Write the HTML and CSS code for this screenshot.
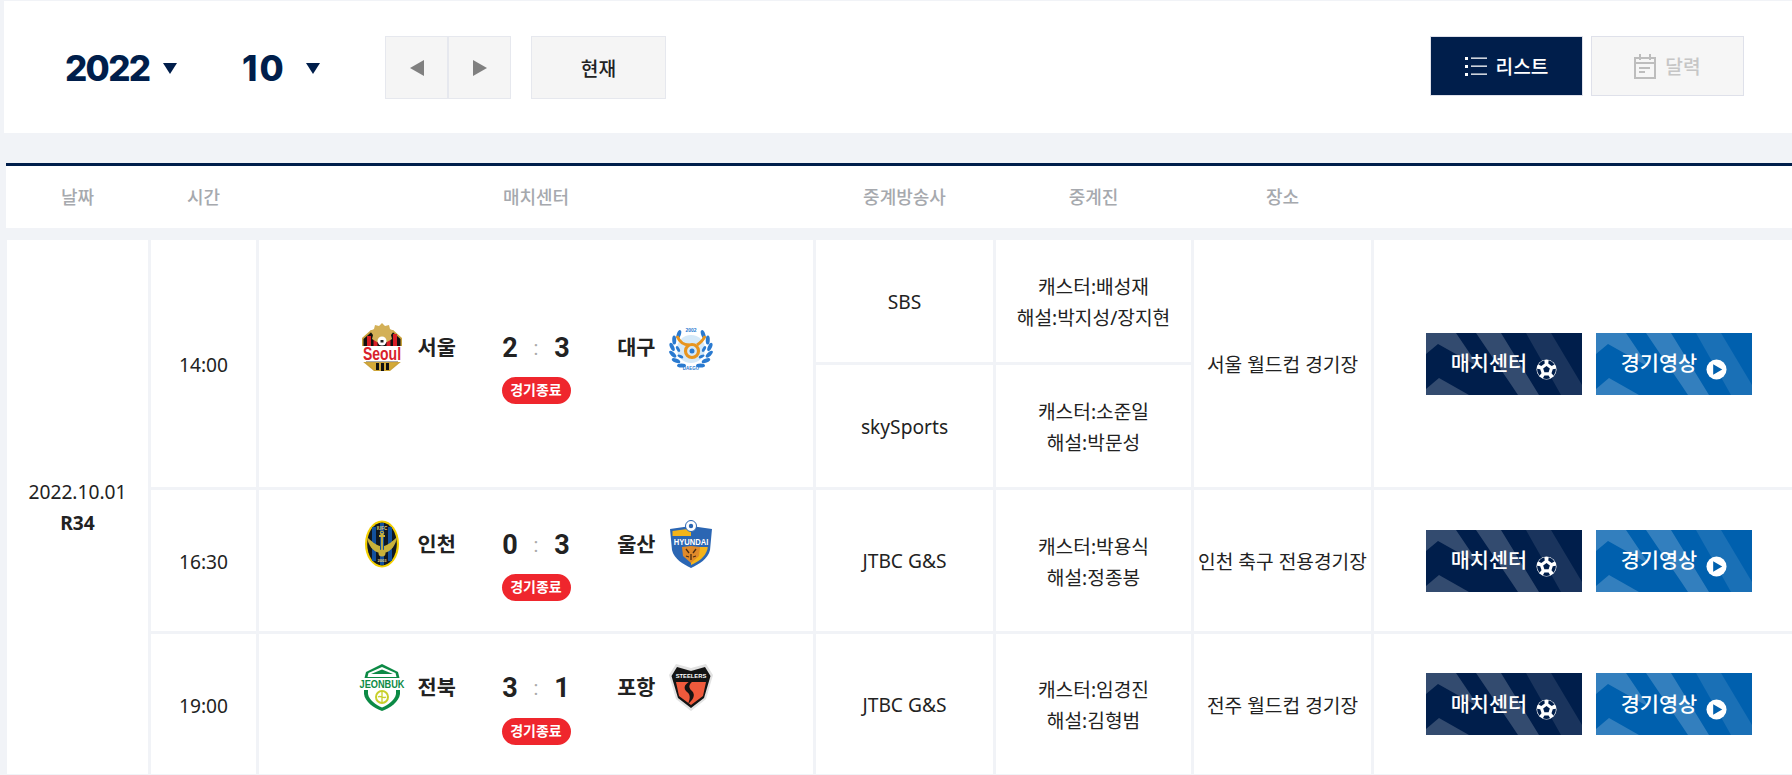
FILE: index.html
```html
<!DOCTYPE html>
<html lang="ko">
<head>
  <meta charset="utf-8">
  <title>경기일정</title>
  <link rel="stylesheet" href="styles.css">
</head>
<body>
  <svg class="defs" width="0" height="0">
    <symbol id="ball" viewBox="0 0 22 22">
      <circle cx="11" cy="11" r="10.500" fill="#fff"/>
      <polygon points="11,7.300 14.500,9.900 13.200,14 8.800,14 7.500,9.900" fill="#001e4b"/>
      <g fill="#001e4b">
        <path d="M7.200 1.900A9.800 9.800 0 0 1 14.800 1.900L13.200 4.800H8.800Z" transform="rotate(36 11 11)"/>
        <path d="M7.200 1.900A9.800 9.800 0 0 1 14.800 1.900L13.200 4.800H8.800Z" transform="rotate(108 11 11)"/>
        <path d="M7.200 1.900A9.800 9.800 0 0 1 14.800 1.900L13.200 4.800H8.800Z" transform="rotate(180 11 11)"/>
        <path d="M7.200 1.900A9.800 9.800 0 0 1 14.800 1.900L13.200 4.800H8.800Z" transform="rotate(252 11 11)"/>
        <path d="M7.200 1.900A9.800 9.800 0 0 1 14.800 1.900L13.200 4.800H8.800Z" transform="rotate(324 11 11)"/>
      </g>
    </symbol>
    <symbol id="play" viewBox="0 0 22 22">
      <circle cx="11" cy="11" r="10.500" fill="#fff"/>
      <polygon points="7.500,5.500 17,11 7.500,16.500" fill="#0060ae"/>
    </symbol>
  </svg>

  <div class="topbar">
    <div class="picker picker-year"><span class="picker-val">2022</span><i class="caret"></i></div>
    <div class="picker picker-month"><span class="picker-val">10</span><i class="caret"></i></div>
    <div class="nav">
      <button class="nav-btn"><i class="arrow arrow-left"></i></button>
      <button class="nav-btn"><i class="arrow arrow-right"></i></button>
    </div>
    <button class="now-btn">현재</button>
    <div class="views">
      <button class="view-btn view-on">
        <svg width="22" height="20" viewBox="0 0 22 20" fill="#fff">
          <rect x="0" y="1" width="3" height="3"/><rect x="0" y="9" width="3" height="3"/><rect x="0" y="17" width="3" height="3"/>
          <rect x="6" y="1.500" width="16" height="1.300"/><rect x="6" y="9.500" width="16" height="1.300"/><rect x="6" y="17.500" width="16" height="1.300"/>
        </svg>
        리스트
      </button>
      <button class="view-btn">
        <svg width="22" height="25" viewBox="0 0 22 25" fill="none" stroke="#bdbdbd" stroke-width="2">
          <rect x="1" y="4" width="20" height="20"/>
          <path d="M1 9H21M6 0V6M16 0V6M5 14H16M5 18H11"/>
        </svg>
        달력
      </button>
    </div>
  </div>

  <div class="thead">
    <div>날짜</div>
    <div>시간</div>
    <div>매치센터</div>
    <div>중계방송사</div>
    <div>중계진</div>
    <div>장소</div>
    <div></div>
  </div>

  <div class="tbody">
    <div class="cell cell-date">2022.10.01<br><b>R34</b></div>

    <!-- 서울 : 대구 -->
    <div class="cell txt span2">14:00</div>
    <div class="cell span2">
      <div class="match">
        <div class="team">
          <svg class="logo" viewBox="0 0 48 48">
            <polygon points="13,7 35,7 44,15 44,38 32,48 16,48 4,38 4,15" fill="#c9a23c"/>
            <polygon points="14,8.500 34,8.500 42.500,16 42.500,25 5.500,25 5.500,16" fill="#111"/>
            <path d="M9 13h4v12H9z M15.500 9h4v16h-4z M28.500 9h4v16h-4z M35 11h4v14h-4z" fill="#d81f26"/>
            <path d="M24 0l3 3 4-1 1 4 4 2-3 4 1 4-5 3H19l-5-3 1-4-3-4 4-2 1-4 4 1z" fill="#d3b057"/>
            <circle cx="24" cy="18" r="4.500" fill="#fff"/><path d="M22.500 17h3v2.500h-3z" fill="#222"/>
            <rect x="4" y="23" width="40" height="16" fill="#fff"/>
            <text transform="translate(24 37) scale(1 1.300)" class="logo-text" font-size="14" fill="#d81f2c" text-anchor="middle">Seoul</text>
            <rect x="8" y="38" width="32" height="1" fill="#aaa"/>
            <polygon points="9,40 39,40 31,47.500 17,47.500" fill="#d4a937"/>
            <path d="M18 40h3v7h-3z M23 40h3v8h-3z M28 40h3v7h-3z" fill="#111"/>
          </svg>
          <span class="name">서울</span>
        </div>
        <div class="result">
          <div class="score"><span>2</span><em>:</em><span>3</span></div>
          <span class="badge">경기종료</span>
        </div>
        <div class="team team-away">
          <span class="name">대구</span>
          <svg class="logo" viewBox="0 0 48 48">
            <circle cx="24" cy="26" r="14" fill="#d5e9f8"/>
            <g fill="#2a7ad0">
              <ellipse cx="24" cy="7" rx="2" ry="4.500" transform="rotate(40 24 26) rotate(-60 24 7)"/>
              <ellipse cx="24" cy="7" rx="2" ry="4.500" transform="rotate(62 24 26) rotate(-60 24 7)"/>
              <ellipse cx="24" cy="7" rx="2" ry="4.500" transform="rotate(84 24 26) rotate(-60 24 7)"/>
              <ellipse cx="24" cy="7" rx="2" ry="4.500" transform="rotate(106 24 26) rotate(-60 24 7)"/>
              <ellipse cx="24" cy="7" rx="2" ry="4.500" transform="rotate(128 24 26) rotate(-60 24 7)"/>
              <ellipse cx="24" cy="7" rx="2" ry="4.500" transform="rotate(150 24 26) rotate(-60 24 7)"/>
              <ellipse cx="24" cy="7" rx="2" ry="4.500" transform="rotate(-40 24 26) rotate(60 24 7)"/>
              <ellipse cx="24" cy="7" rx="2" ry="4.500" transform="rotate(-62 24 26) rotate(60 24 7)"/>
              <ellipse cx="24" cy="7" rx="2" ry="4.500" transform="rotate(-84 24 26) rotate(60 24 7)"/>
              <ellipse cx="24" cy="7" rx="2" ry="4.500" transform="rotate(-106 24 26) rotate(60 24 7)"/>
              <ellipse cx="24" cy="7" rx="2" ry="4.500" transform="rotate(-128 24 26) rotate(60 24 7)"/>
              <ellipse cx="24" cy="7" rx="2" ry="4.500" transform="rotate(-150 24 26) rotate(60 24 7)"/>
              <ellipse cx="24" cy="13" rx="1.500" ry="3.200" transform="rotate(90 24 26) rotate(-60 24 13)"/>
              <ellipse cx="24" cy="13" rx="1.500" ry="3.200" transform="rotate(125 24 26) rotate(-60 24 13)"/>
              <ellipse cx="24" cy="13" rx="1.500" ry="3.200" transform="rotate(-90 24 26) rotate(60 24 13)"/>
              <ellipse cx="24" cy="13" rx="1.500" ry="3.200" transform="rotate(-125 24 26) rotate(60 24 13)"/>
            </g>
            <text x="24" y="9" class="logo-text" font-size="5" fill="#2a7ad0" text-anchor="middle">2002</text>
            <text x="24" y="47" class="logo-text" font-size="4.500" fill="#2a7ad0" text-anchor="middle">DAEGU</text>
            <path d="M10 13c3 7 7 9 12 9 M38 13c-2 5-5 7-8 9" fill="none" stroke="#e8951f" stroke-width="3"/>
            <circle cx="25" cy="28" r="6.500" fill="none" stroke="#e8951f" stroke-width="3.200"/>
            <circle cx="25" cy="28" r="2.500" fill="#2a7ad0"/>
          </svg>
        </div>
      </div>
    </div>
    <div class="cell latin">SBS</div>
    <div class="cell txt">캐스터:배성재<br>해설:박지성/장지현</div>
    <div class="cell txt span2">서울 월드컵 경기장</div>
    <div class="cell cell-btns span2">
      <a class="btn btn-center">매치센터<svg class="btn-icon"><use href="#ball"/></svg></a>
      <a class="btn btn-video">경기영상<svg class="btn-icon"><use href="#play"/></svg></a>
    </div>
    <div class="cell latin">skySports</div>
    <div class="cell txt">캐스터:소준일<br>해설:박문성</div>

    <!-- 인천 : 울산 -->
    <div class="cell txt">16:30</div>
    <div class="cell">
      <div class="match">
        <div class="team">
          <svg class="logo" viewBox="0 0 48 48">
            <ellipse cx="24" cy="24" rx="17" ry="23.500" fill="#f3cf00"/>
            <ellipse cx="24" cy="24" rx="14.800" ry="21.500" fill="#101820"/>
            <path d="M14 7h4v34h-4z M22 3h4v42h-4z M30 7h4v34h-4z" fill="#12509c"/>
            <text x="24" y="10" class="logo-text" font-size="4.500" fill="#e8d27a" text-anchor="middle">IUFC</text>
            <path d="M9 17c4 4 9 8 13 9v7C15 32 10 25 9 17z M39 17c-4 4-9 8-13 9v7c7-1 12-8 13-16z" fill="#c9b23a"/>
            <path d="M24 13v20M21 16h6" stroke="#c9b23a" stroke-width="1.800" fill="none"/>
            <circle cx="24" cy="13" r="1.800" fill="none" stroke="#c9b23a"/>
            <circle cx="24" cy="33" r="3.500" fill="#c9b23a"/>
            <text x="24" y="42" class="logo-text" font-size="4" fill="#e8d27a" text-anchor="middle">2003</text>
          </svg>
          <span class="name">인천</span>
        </div>
        <div class="result">
          <div class="score"><span>0</span><em>:</em><span>3</span></div>
          <span class="badge">경기종료</span>
        </div>
        <div class="team team-away">
          <span class="name">울산</span>
          <svg class="logo" viewBox="0 0 48 48">
            <path d="M3 9L24 6 45 9 43 30C41 39 32 44 24 48 16 44 7 39 5 30Z" fill="#2b66b3"/>
            <path d="M5.500 11L24 8.500V16H5.500Z" fill="#f4b41a"/>
            <path d="M24 27V45C31 42 38.500 37 40.500 29L40.700 27Z" fill="#f4b41a"/>
            <circle cx="24" cy="6" r="5.500" fill="#fff" stroke="#2b66b3"/>
            <circle cx="24" cy="6" r="2.200" fill="#2b66b3"/>
            <text transform="translate(24 24.500) scale(1 1.300)" class="logo-text" font-size="7.600" fill="#fff" text-anchor="middle">HYUNDAI</text>
            <path d="M15 27L24 26 33 27 32 36 24 43 16 36Z" fill="#e08a2a"/>
            <path d="M19 29l3 4M29 29l-3 4M24 34v6M19 36l3 1M29 36l-3 1" stroke="#4a2b12" stroke-width="1.300"/>
          </svg>
        </div>
      </div>
    </div>
    <div class="cell latin">JTBC G&amp;S</div>
    <div class="cell txt">캐스터:박용식<br>해설:정종봉</div>
    <div class="cell txt">인천 축구 전용경기장</div>
    <div class="cell cell-btns">
      <a class="btn btn-center">매치센터<svg class="btn-icon"><use href="#ball"/></svg></a>
      <a class="btn btn-video">경기영상<svg class="btn-icon"><use href="#play"/></svg></a>
    </div>

    <!-- 전북 : 포항 -->
    <div class="cell txt">19:00</div>
    <div class="cell">
      <div class="match">
        <div class="team">
          <svg class="logo" viewBox="0 0 48 48">
            <path d="M8 8L24 0 40 8 42 16H6Z" fill="#0c8a45"/>
            <path d="M10.500 9L24 3 37.500 9 38.500 13H9.500Z" fill="#fff"/>
            <path d="M13 10L24 5.500 35 10Z" fill="#0c8a45"/>
            <path d="M6 24H42V30C41 38 32 44 24 47 16 44 7 38 6 30Z" fill="#0c8a45"/>
            <path d="M10 26H38V30C37 36 30 41 24 43.500 18 41 11 36 10 30Z" fill="#fff"/>
            <rect x="0" y="14" width="48" height="12" fill="#fff"/>
            <text transform="translate(24 24) scale(1 1.200)" class="logo-text" font-size="9.200" fill="#0c8a45" text-anchor="middle">JEONBUK</text>
            <circle cx="24" cy="33" r="6" fill="none" stroke="#c8cf2a" stroke-width="2"/>
            <path d="M20 33c3-2 5 2 8 0M24 27v12" fill="none" stroke="#c8cf2a" stroke-width="1.300"/>
          </svg>
          <span class="name">전북</span>
        </div>
        <div class="result">
          <div class="score"><span>3</span><em>:</em><span>1</span></div>
          <span class="badge">경기종료</span>
        </div>
        <div class="team team-away">
          <span class="name">포항</span>
          <svg class="logo" viewBox="0 0 48 48">
            <path d="M9 0L24 4 39 0 46 11 39 35 24 47 9 35 2 11Z" fill="#e2e2e2"/>
            <path d="M10 3L24 7 38 3 43.500 12 37 34 24 44 11 34 4.500 12Z" fill="#141414"/>
            <path d="M9 18L39 18 36 32 24 41 12 32Z" fill="#ef5a3c"/>
            <path d="M31 15C22 18 20 23 25 27 29 31 26 36 21 40 24 33 23 30 19 27 15 22 20 17 31 15Z" fill="#141414"/>
            <text x="24" y="14" class="logo-text" font-size="5.800" fill="#fff" text-anchor="middle">STEELERS</text>
          </svg>
        </div>
      </div>
    </div>
    <div class="cell latin">JTBC G&amp;S</div>
    <div class="cell txt">캐스터:임경진<br>해설:김형범</div>
    <div class="cell txt">전주 월드컵 경기장</div>
    <div class="cell cell-btns">
      <a class="btn btn-center">매치센터<svg class="btn-icon"><use href="#ball"/></svg></a>
      <a class="btn btn-video">경기영상<svg class="btn-icon"><use href="#play"/></svg></a>
    </div>
  </div>
</body>
</html>
```

FILE: styles.css
```css
html, body {
  margin: 0;
  padding: 0;
}
body {
  background-color: #f1f3f7;
  font-family: "Noto Sans", "Noto Sans CJK KR", sans-serif;
  font-size: 19.2px;
  line-height: 30.7px;
  color: #222;
  padding-top: 1px;
}
button {
  font-family: inherit;
  cursor: pointer;
}
.defs {
  display: block;
  height: 0;
}

/* top bar */
.topbar {
  display: flex;
  margin-left: 4px;
  height: 132px;
  padding: 35px 48px 0 61px;
  box-sizing: border-box;
  background-color: #fff;
}
.picker {
  display: flex;
  height: 63px;
  align-items: center;
  color: #001e4b;
}
.picker-val {
  font-family: Inter, sans-serif;
  font-size: 35px;
  font-weight: 800;
  line-height: 1;
  padding-top: 2px;
}
.picker-year {
  width: 178px;
}
.picker-year .picker-val {
  letter-spacing: -1.700px;
}
.picker-month {
  width: 143px;
  margin-left: -1px;
}
.picker-month .picker-val {
  letter-spacing: 2px;
}
.caret {
  width: 0;
  height: 0;
  border-left: 7.500px solid transparent;
  border-right: 7.500px solid transparent;
  border-top: 11px solid #001e4b;
  margin-left: 14px;
  margin-top: 2px;
}
.picker-month .caret {
  margin-left: 20px;
}
.nav {
  display: flex;
  margin-right: 20px;
}
.nav-btn {
  display: flex;
  align-items: center;
  justify-content: center;
  width: 63px;
  height: 63px;
  padding: 0;
  background-color: #f5f5f5;
  border: 1px solid #e6e8ee;
}
.arrow {
  display: block;
  width: 0;
  height: 0;
  border-top: 8px solid transparent;
  border-bottom: 8px solid transparent;
}
.arrow-left {
  border-right: 14px solid #808080;
}
.arrow-right {
  border-left: 14px solid #808080;
}
.now-btn {
  width: 135px;
  height: 63px;
  font-size: 19.200px;
  font-weight: 500;
  color: #222;
  background-color: #f5f5f5;
  border: 1px solid #e6e8ee;
}
.views {
  display: flex;
  gap: 8px;
  margin-left: auto;
}
.view-btn {
  display: flex;
  align-items: center;
  justify-content: center;
  gap: 9px;
  width: 153px;
  height: 60px;
  padding: 0;
  font-size: 19.200px;
  font-weight: 500;
  color: #c6c6c6;
  background-color: #f6f6f6;
  border: 1px solid #dfe1ea;
}
.view-on {
  color: #fff;
  background-color: #001e4b;
}

/* list */
.thead, .tbody {
  display: grid;
  grid-template-columns: 141px 105px 554px 177px 195px 177px 1fr;
  column-gap: 3px;
}
.thead {
  margin: 30px 0 12px 6px;
  padding-left: 1px;
  height: 62px;
  align-items: center;
  text-align: center;
  font-size: 18px;
  font-weight: 500;
  color: #a6a9ae;
  background-color: #fff;
  border-top: 3px solid #001e4b;
}
.tbody {
  margin-left: 7px;
  grid-template-rows: 122px 122px 141px 140px;
  row-gap: 3px;
}
.cell {
  display: flex;
  align-items: center;
  justify-content: center;
  text-align: center;
  background-color: #fff;
}
.txt {
  padding-top: 4px;
}
.latin {
  padding-top: 2px;
}
.cell-date {
  grid-row: span 4;
  display: block;
  padding-top: 237px;
  box-sizing: border-box;
}
.cell-date b {
  font-weight: 700;
}
.span2 {
  grid-row: span 2;
}

/* match */
.match {
  display: flex;
  align-items: flex-start;
  width: 357px;
}
.team {
  display: flex;
  align-items: center;
  gap: 12px;
  width: 118px;
  height: 48px;
}
.team-away {
  justify-content: flex-end;
}
.logo {
  width: 48px;
  height: 48px;
  flex: none;
}
.logo-text {
  font-family: "Liberation Sans", sans-serif;
  font-weight: 700;
}
.name {
  font-size: 20.800px;
  font-weight: 700;
  line-height: 1;
  white-space: nowrap;
}
.team-away .name {
  margin-right: -1px;
}
.result {
  flex: 1;
  display: flex;
  flex-direction: column;
  align-items: center;
}
.score {
  display: flex;
  justify-content: center;
  height: 48px;
  box-sizing: border-box;
  padding-top: 2px;
  align-items: center;
  font-family: Roboto, sans-serif;
  font-size: 27px;
  font-weight: 700;
}
.score span {
  width: 30px;
}
.score em {
  width: 22px;
  font-size: 20px;
  font-style: normal;
  font-weight: 400;
  color: #aaa;
}
.badge {
  width: 69px;
  height: 27px;
  margin-top: 6px;
  font-size: 14px;
  font-weight: 700;
  line-height: 26px;
  text-align: center;
  color: #fff;
  background-color: #ef262d;
  border-radius: 13.500px;
}

/* buttons */
.cell-btns {
  justify-content: flex-start;
  gap: 14px;
  padding-left: 52px;
}
.btn {
  display: flex;
  align-items: center;
  justify-content: center;
  width: 156px;
  height: 62px;
  font-size: 20.800px;
  font-weight: 500;
  color: #fff;
  background-image: url("data:image/svg+xml,%3Csvg xmlns='http://www.w3.org/2000/svg' width='156' height='62'%3E%3Cg fill='white' fill-opacity='.2'%3E%3Cpolygon points='0,0 30,0 53,34 12,11 0,21'/%3E%3Cpolygon points='50,0 75,0 113,62 92,62 86,53'/%3E%3Cpolygon points='13,45 43,62 0,62 0,56'/%3E%3C/g%3E%3Cpolygon fill='white' fill-opacity='.1' points='100,0 125,0 156,52 156,62 135,62'/%3E%3C/svg%3E");
}
.btn-center {
  background-color: #001e4b;
}
.btn-video {
  background-color: #0060ae;
}
.btn-icon {
  width: 21px;
  height: 21px;
  margin: 11px 0 0 9px;
}
```
